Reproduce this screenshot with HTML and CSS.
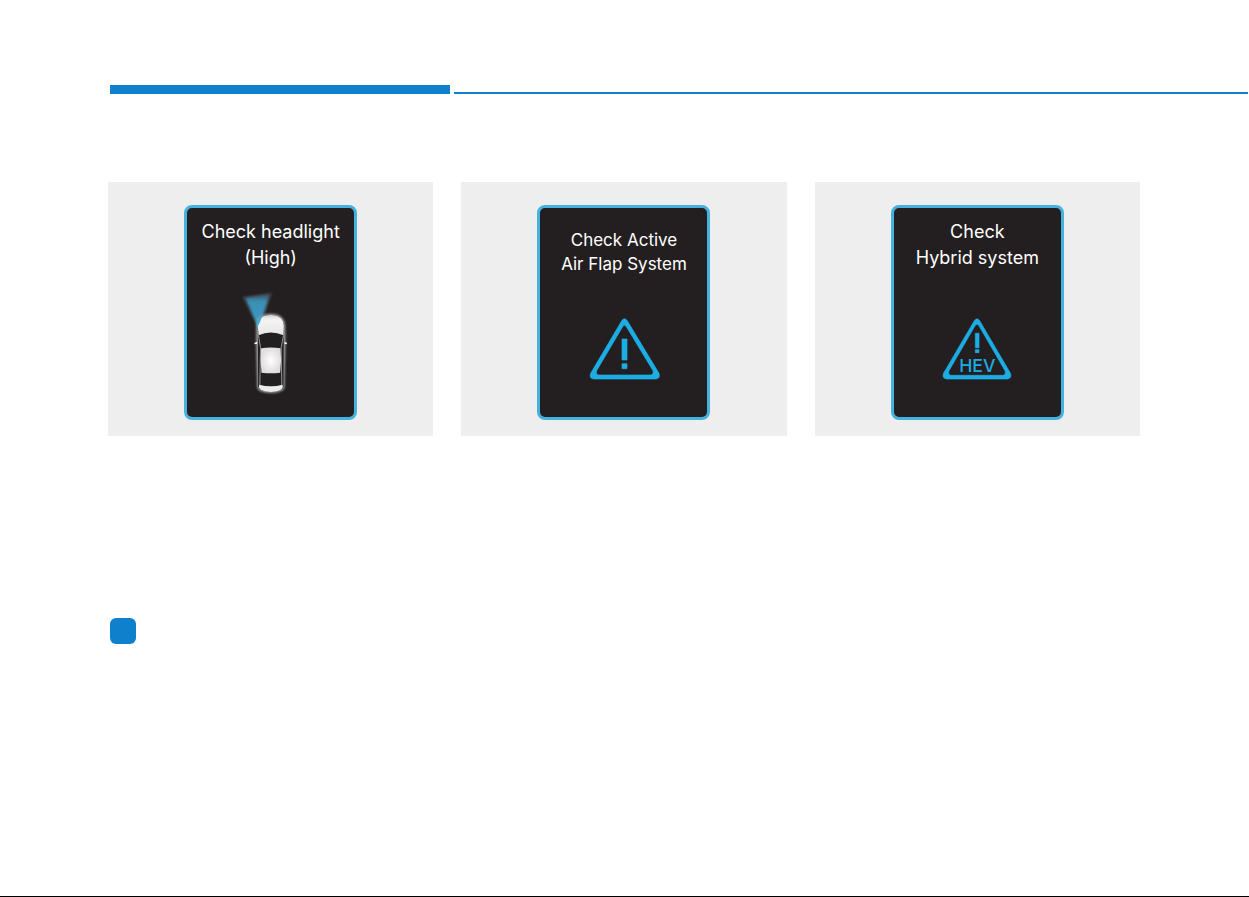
FILE: index.html
```html
<!DOCTYPE html>
<html lang="en">
<head>
<meta charset="utf-8">
<title>Warning messages</title>
<link rel="stylesheet" href="styles.css">
</head>
<body>
<div class="page">
  <header class="rule">
    <span class="rule-thick"></span>
    <span class="rule-thin"></span>
  </header>
  <main class="content">
    <section class="cards">
      <figure class="card">
        <div class="screen">
          <p class="message">Check headlight<br>(High)</p>
          <svg class="picture" viewBox="-13.5 18 300 330" aria-hidden="true">
            <defs>
              <radialGradient id="roof"><stop offset="0" stop-color="#fff"/><stop offset="1" stop-color="#dedede"/></radialGradient>
              <linearGradient id="hood" x1="0" y1="0" x2="0" y2="1"><stop offset="0" stop-color="#d2d2d3"/><stop offset=".25" stop-color="#f4f4f4"/><stop offset="1" stop-color="#e6e6e6"/></linearGradient>
              <linearGradient id="beam" x1="0" y1="0" x2="0" y2="1"><stop offset="0" stop-color="#3a8fb4" stop-opacity=".15"/><stop offset=".25" stop-color="#3a8fb4"/><stop offset="1" stop-color="#3a9ac4"/></linearGradient>
              <filter id="soft" x="-20%" y="-20%" width="140%" height="140%"><feGaussianBlur stdDeviation="2.5"/></filter>
            </defs>
            <path d="M50 50L140 38L117 108L93 134Z" fill="#55616a" opacity=".5" filter="url(#soft)"/>
            <path d="M60 54L132 42L112 108L93 130Z" fill="url(#beam)" filter="url(#soft)"/>
            <path d="M92 134C93 114 106 102 136 101C166 102 178 116 179 137L180 188L177 322Q175 338 136 339Q97 338 95 322L92 188Z" fill="#a2a2a4" filter="url(#soft)"/>
            <path d="M97 137C98 115 109 106 136 105C163 106 174 117 175 138L174 320Q172 334 136 335Q100 334 98 320Z" fill="#231f20"/>
            <path d="M97 138C98 115 109 106 136 105C163 106 174 117 175 138L174 166Q136 149 99 166Z" fill="url(#hood)"/>
            <path d="M94 144V128Q99 114 110 109Q105 126 94 144Z" fill="#35aee0"/>
            <path d="M99 166L105 203L103 316M174 166L167 203L169 316" fill="none" stroke="#d0d0d0" stroke-width="2"/>
            <path d="M95 185L86 189L88 193L95 191ZM177 185L185 189L183 193L177 191Z" fill="#fff"/>
            <path d="M107 205Q136 200 165 205Q169 241 164 278Q136 282 108 278Q103 241 107 205Z" fill="url(#roof)"/>
            <path d="M101 314Q136 323 171 314L172 322Q168 335 136 336Q104 335 100 322Z" fill="#ececec"/>
          </svg>
        </div>
      </figure>
      <figure class="card">
        <div class="screen">
          <p class="message message-compact">Check Active<br>Air Flap System</p>
          <svg class="picture" viewBox="-18 -72 300 330" aria-hidden="true">
            <path class="triangle" fill-rule="evenodd" d="M126 31Q133 22 141 31L237 190Q242 205 228 207H41Q26 205 32 190ZM128 50L50 182Q46 194 57 195H211Q222 194 219 182L139 50Q133 42 128 50Z"/>
            <path class="triangle" d="M126 87H141V150H126ZM126 161H141V176H126Z"/>
          </svg>
        </div>
      </figure>
      <figure class="card">
        <div class="screen">
          <p class="message">Check<br>Hybrid system</p>
          <svg class="picture" viewBox="-9 -72 300 330" role="img" aria-label="HEV warning">
            <path class="triangle" fill-rule="evenodd" d="M133 32Q141 21 149 32L241 189Q247 205 232 207H50Q34 205 41 189ZM136 46L57 182Q53 195 64 196H218Q229 195 225 182L146 46Q141 39 136 46Z"/>
            <path class="triangle" d="M136 70H147V113H136ZM136 119H147V128H136Z"/>
            <text class="hev" x="142" y="187">HEV</text>
          </svg>
        </div>
      </figure>
    </section>
    <div class="marker"></div>
  </main>
</div>
</body>
</html>
```
FILE: styles.css
```css
* {
  box-sizing: border-box;
}

body {
  margin: 0;
  background: #fff;
  font-family: Inter, "Liberation Sans", sans-serif;
}

.page {
  min-height: 100vh;
  padding-top: 85px;
  border-bottom: 1px solid #000;
}

.rule {
  display: flex;
  align-items: flex-end;
  gap: 4px;
  padding: 0 1px 0 110px;
}

.rule-thick {
  flex: 0 0 340px;
  height: 9px;
  background: #0f80cc;
}

.rule-thin {
  flex: 1;
  height: 2px;
  background: #0f80cc;
}

.content {
  padding: 88px 109px 40px 108px;
}

.cards {
  display: grid;
  grid-template-columns: repeat(3, 1fr);
  gap: 28px;
}

.card {
  display: flex;
  justify-content: center;
  margin: 0;
  padding: 23px 0 16px;
  background: #eee;
}

.screen {
  display: flex;
  flex-direction: column;
  align-items: center;
  justify-content: space-between;
  width: 173px;
  height: 215px;
  padding: 11px 0 21px;
  border: 3px solid #45b2de;
  border-radius: 8px;
  background: #231f20;
}

.message {
  margin: 0;
  color: #fff;
  font-size: 18px;
  line-height: 26px;
  text-align: center;
  white-space: nowrap;
}

.message-compact {
  padding-top: 9px;
  font-size: 17px;
  line-height: 24px;
}

.picture {
  display: block;
  width: 100px;
  height: 110px;
  flex: none;
}

.triangle {
  fill: #1cade4;
  stroke: #1cade4;
  stroke-width: 2px;
}

.hev {
  fill: #1cade4;
  font-size: 53px;
  font-weight: 500;
  text-anchor: middle;
}

.marker {
  width: 26px;
  height: 26px;
  margin: 182px 0 0 2px;
  border-radius: 6px;
  background: #0f80cc;
}
```
